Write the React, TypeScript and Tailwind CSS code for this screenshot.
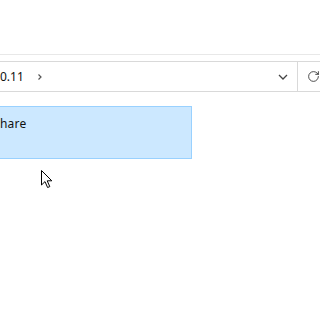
import { RotateCw } from 'lucide-react';

function Cursor() {
  return (
    <svg width="13" height="20" viewBox="0 0 13 20" className="absolute left-[40px] top-[169px]">
      <path
        d="M1.5 1.5 L1.5 16 L5 12.6 L7.6 18.5 L9.8 17.6 L7.2 11.8 L11.8 11.8 Z"
        fill="#fff"
        stroke="#000"
        strokeWidth="1"
        strokeLinejoin="round"
      />
    </svg>
  );
}

export default function App() {
  return (
    <div
      className="relative w-[320px] h-[320px] bg-white overflow-hidden"
      style={{ fontFamily: '"Noto Sans", "Open Sans", sans-serif' }}
    >
      <div className="h-[54px]" />
      <div className="h-px bg-[#e8e8e8]" />
      <div className="h-[6px]" />

      {/* address bar */}
      <div className="flex h-[31px] border-y border-[#d9d9d9]">
        <div className="flex-1 flex items-center">
          <span className="text-[12px] text-[#111] leading-none">0.11</span>
          <svg width="6" height="8" viewBox="0 0 6 8" className="ml-[13px]">
            <polyline points="1.5,1.5 4,4 1.5,6.5" fill="none" stroke="#555" strokeWidth="1.2" />
          </svg>
          <div className="flex-1" />
          <svg width="10" height="6" viewBox="0 0 10 6" className="mr-[9px]">
            <polyline points="1,1 5,5 9,1" fill="none" stroke="#444" strokeWidth="1.3" />
          </svg>
        </div>
        <div className="w-[23px] border-l border-[#d9d9d9] flex items-center pl-[9px]">
          <RotateCw size={13} strokeWidth={1.6} color="#333" />
        </div>
      </div>

      <div className="h-[14px]" />

      {/* selected item */}
      <div className="w-[192px] h-[53px] bg-[#cce8ff] border border-l-0 border-[#99d1ff] pt-[9px]">
        <span className="block text-[12px] text-[#111] leading-[16px] tracking-[0.2px]">hare</span>
      </div>

      <Cursor />
    </div>
  );
}
